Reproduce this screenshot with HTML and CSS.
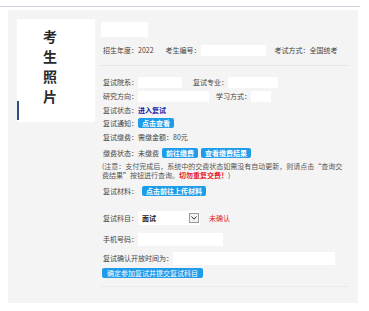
FILE: index.html
```html
<!DOCTYPE html>
<html lang="zh">
<head>
    <meta charset="UTF-8">
    <meta name="viewport" content="width=device-width, initial-scale=1.0">
    <title>复试信息</title>
    <link rel="stylesheet" href="styles.css">
</head>
<body>
    <div class="topline"></div>
    <div class="panel">
        <div class="photo">
            <div class="photo-text">
                <span>考</span>
                <span>生</span>
                <span>照</span>
                <span>片</span>
            </div>
            <span class="photo-mark"></span>
        </div>
        <div class="info">
            <div class="name-box"></div>
            <div class="row head-row">
                <span>招生年度：2022</span>
                <span class="ml12">考生编号：</span><span class="field w65"></span>
                <span class="ml9">考试方式：全国统考</span>
            </div>
            <div class="divider"></div>

            <div class="row r-first">
                <span class="label">复试院系：</span><span class="field w44"></span>
                <span class="ml11">复试专业：</span><span class="field w50"></span>
            </div>
            <div class="row">
                <span class="label">研究方向：</span><span class="field w71"></span>
                <span class="ml7">学习方式：</span><span class="field w20"></span>
            </div>
            <div class="row r-short">
                <span class="label">复试状态：</span><span class="status">进入复试</span>
            </div>
            <div class="row">
                <span class="label">复试通知：</span><span class="btn">点击查看</span>
            </div>
            <div class="row">
                <span class="label">复试缴费：</span>需缴金额：80元
            </div>
            <div class="row r-pay">
                <span>缴费状态：未缴费</span>
                <span class="btn ml3">前往缴费</span>
                <span class="btn ml3">查看缴费结果</span>
            </div>
            <div class="note">(注意：支付完成后，系统中的交费状态如需没有自动更新，则请点击“查询交<br>费结果”按钮进行查询。<span class="warn">切勿重复交费！</span>)</div>
            <div class="row r-material">
                <span class="label">复试材料：</span><span class="btn ml4">点击前往上传材料</span>
            </div>

            <div class="row r-subject">
                <span class="label">复试科目：</span>
                <span class="select">面试
                    <span class="select-arrow">
                        <svg width="6" height="4" viewBox="0 0 6 4"><polyline points="0.5,0.5 3,3.2 5.5,0.5" fill="none" stroke="#333" stroke-width="1"/></svg>
                    </span>
                </span>
                <span class="unconfirmed">未确认</span>
            </div>
            <div class="row r-phone">
                <span class="label">手机号码：</span><span class="field w85 tall"></span>
            </div>
            <div class="row r-open">
                <span>复试确认开放时间为：</span><span class="field w162 tall"></span>
            </div>
            <div class="submit-wrap">
                <span class="btn btn-submit">确定参加复试并提交复试科目</span>
            </div>
            <div class="divider bottom-line"></div>
        </div>
    </div>
</body>
</html>
```

FILE: styles.css
```css
* {
    box-sizing: border-box;
}
body {
    margin: 0;
    font-family: "Noto Sans CJK SC", sans-serif;
    font-size: 7px;
    color: #444;
    background: #fff;
}
.topline {
    margin-top: 6px;
    width: 360px;
    height: 1px;
    background: #cdd5de;
}
.panel {
    display: flex;
    width: 350px;
    height: 293px;
    margin: 3px 0 0 8px;
    padding: 9px;
    background: #f4f4f4;
}
.photo {
    position: relative;
    width: 78px;
    height: 103px;
    padding: 10px 0 0 26px;
    background: #fff;
}
.photo-text {
    display: flex;
    flex-direction: column;
    gap: 6px;
    font-size: 14px;
    line-height: 14px;
    font-weight: bold;
    color: #2a2a2a;
}
.photo-mark {
    position: absolute;
    left: 0;
    top: 82px;
    width: 2px;
    height: 19px;
    background: #2d4f80;
}
.info {
    flex: 1;
    margin-left: 6px;
}
.name-box {
    width: 47px;
    height: 15px;
    margin-top: 3px;
    background: #fff;
}
.row {
    display: flex;
    align-items: center;
    height: 14px;
    padding-left: 2px;
    white-space: nowrap;
}
.head-row {
    margin-top: 6px;
}
.divider {
    height: 1px;
    margin-top: 8px;
    background: #e4e4e4;
}
.r-first {
    margin-top: 9px;
}
.r-short {
    height: 13px;
}
.r-pay {
    margin-top: 2px;
}
.r-material {
    margin-top: 4px;
}
.r-subject {
    height: 16px;
    margin-top: 12px;
}
.r-phone {
    margin-top: 6px;
}
.r-open {
    margin-top: 5px;
}
.label {
    width: 35px;
}
.field {
    display: inline-block;
    height: 11px;
    background: #fff;
}
.field.tall {
    height: 13px;
}
.w20 { width: 20px; }
.w44 { width: 44px; }
.w50 { width: 50px; }
.w65 { width: 65px; }
.w71 { width: 71px; }
.w85 { width: 85px; }
.w162 { width: 162px; }
.ml3 { margin-left: 3px; }
.ml4 { margin-left: 4px; }
.ml7 { margin-left: 7px; }
.ml9 { margin-left: 9px; }
.ml11 { margin-left: 11px; }
.ml12 { margin-left: 12px; }
.status {
    color: #2323a8;
    font-weight: bold;
}
.btn {
    display: inline-block;
    height: 10px;
    line-height: 10px;
    padding: 0 4px;
    border-radius: 2px;
    background: #1e9be9;
    color: #fff;
    font-weight: bold;
}
.note {
    margin-top: 2px;
    padding-left: 1px;
    line-height: 9px;
    white-space: nowrap;
    color: #555;
}
.warn {
    color: #e8182a;
    font-weight: bold;
}
.select {
    display: flex;
    align-items: center;
    justify-content: space-between;
    width: 62px;
    height: 14px;
    padding: 0 1px 0 4px;
    background: #fff;
    font-weight: bold;
    color: #222;
}
.select-arrow {
    display: flex;
    align-items: center;
    justify-content: center;
    width: 10px;
    height: 10px;
    border: 1px solid #999;
    background: #f2f2f2;
}
.unconfirmed {
    margin-left: 9px;
    color: #e02020;
}
.submit-wrap {
    margin-top: 3px;
    padding-left: 1px;
}
.btn-submit {
    padding: 0 5px;
    font-weight: normal;
}
.bottom-line {
    margin-top: 8px;
    background: #ebebeb;
}
```
